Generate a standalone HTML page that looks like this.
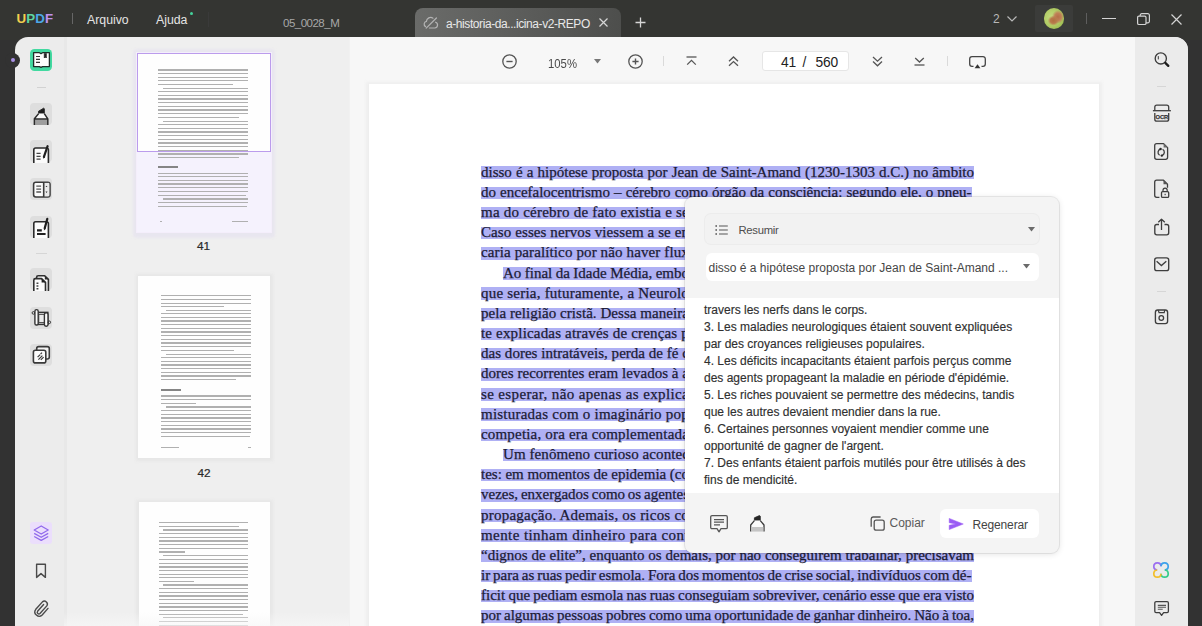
<!DOCTYPE html>
<html><head><meta charset="utf-8">
<style>
*{margin:0;padding:0;box-sizing:border-box}
html,body{width:1202px;height:626px;overflow:hidden;background:#323232;font-family:"Liberation Sans",sans-serif;position:relative}
.a{position:absolute}
svg.i{position:absolute;overflow:visible}
.ttl{position:absolute;color:#e4e4e4;font-size:12.3px;top:13px}
.hl{position:absolute;background:#afb0f4;height:12.5px}
.ln{position:absolute;height:15px;font-family:"Liberation Serif",serif;font-size:15px;line-height:15px;color:#1b1b35;white-space:nowrap;text-align:justify;text-align-last:justify;-webkit-text-stroke:0.25px #1b1b35}
.pt{position:absolute;left:704px;font-size:12px;color:#303030;white-space:nowrap;line-height:14px;-webkit-text-stroke:0.15px #303030}
.ib{position:absolute;width:22px;height:22px;border-radius:4px;background:#dedede}
.tl2{position:absolute;height:1.3px;background:#b0b0b0;filter:blur(0.4px)}
.tx{position:absolute;filter:blur(0.4px)}
</style></head><body>

<div id="tbar" class="a" style="left:0;top:0;width:1202px;height:40px;background:#343532"></div>
<div class="a" style="left:16.5px;top:10.7px;font-weight:bold;font-size:13.3px;letter-spacing:0.1px"><span style="color:#f2cf4e">U</span><span style="color:#5ed6a0">P</span><span style="color:#4ca8e6">D</span><span style="color:#bf92f0">F</span></div>
<div class="a" style="left:71.5px;top:13px;width:1px;height:10.5px;background:#666"></div>
<div class="ttl" style="left:87px">Arquivo</div>
<div class="ttl" style="left:156px">Ajuda</div>
<div class="a" style="left:189.5px;top:11.5px;width:3.5px;height:3.5px;border-radius:50%;background:#44d39b"></div>
<div class="a" style="left:208px;top:12px;width:1px;height:15px;background:#3a3a3a"></div>
<div class="a" style="left:283px;top:17px;font-size:11.5px;color:#a8a8a8;letter-spacing:-0.5px">05_0028_M</div>
<div class="a" style="left:415px;top:8px;width:206px;height:30px;background:linear-gradient(97deg,#6a6b69 0%,#5f605e 40%,#4d4e4c 100%);border-radius:8px 8px 0 0"></div>
<svg class="i" style="left:424px;top:16.5px" width="15" height="12" viewBox="0 0 15 12"><path d="M1.6 9.6 A2.8 2.8 0 0 1 2.4 4.4 A4.2 4.2 0 0 1 9 1.2" fill="none" stroke="#b4b4b4" stroke-width="1.2" stroke-linecap="round"/><path d="M11.6 5.2 A3 3 0 0 1 10.8 11 H5.4" fill="none" stroke="#b4b4b4" stroke-width="1.2" stroke-linecap="round"/><path d="M2.2 11.2 L12.4 1" stroke="#b4b4b4" stroke-width="1.2" stroke-linecap="round"/></svg>
<div class="a" style="left:446px;top:17px;font-size:12px;color:#e8e8e8;letter-spacing:-0.42px">a-historia-da...icina-v2-REPO</div>
<svg class="i" style="left:599px;top:18px" width="9" height="9" viewBox="0 0 9 9"><path d="M0.5 0.5 L8.5 8.5 M8.5 0.5 L0.5 8.5" stroke="#d6d6d6" stroke-width="1.2"/></svg>
<svg class="i" style="left:634.5px;top:16.5px" width="11" height="11" viewBox="0 0 11 11"><path d="M5.5 0.5 V10.5 M0.5 5.5 H10.5" stroke="#d6d6d6" stroke-width="1.3"/></svg>
<div class="a" style="left:993px;top:12px;font-size:12px;color:#b8b8b8">2</div>
<svg class="i" style="left:1007px;top:15.5px" width="10" height="6" viewBox="0 0 10 6"><path d="M0.5 0.5 L5 5 L9.5 0.5" fill="none" stroke="#b8b8b8" stroke-width="1.2"/></svg>
<div class="a" style="left:1035px;top:5px;width:38px;height:26.5px;background:#3b3c3a;border-radius:2px"></div>
<div class="a" style="left:1043.8px;top:8.4px;width:20.6px;height:20.8px;border-radius:50%;background:radial-gradient(ellipse 28% 24% at 47% 60%,#b0703f 0,#b87a4c 55%,rgba(184,122,76,0) 100%),radial-gradient(ellipse 30% 32% at 70% 42%,#b46f48 0,#c08058 55%,rgba(192,128,88,0) 100%),radial-gradient(circle at 40% 45%,#c6dc80 0,#b3cd68 45%,#9cbc50 80%,#6d8a30 100%)"></div>
<div class="a" style="left:1085.5px;top:13px;width:1px;height:11px;background:#5e5e5e"></div>
<div class="a" style="left:1102px;top:18px;width:14px;height:1.3px;background:#d4d4d4"></div>
<svg class="i" style="left:1137px;top:13px" width="13" height="12" viewBox="0 0 13 12"><rect x="0.6" y="3.1" width="8.4" height="8.4" rx="1.3" fill="none" stroke="#d4d4d4" stroke-width="1.2"/><path d="M3.2 3.1 V2.2 A1.6 1.6 0 0 1 4.8 0.6 H10.8 A1.6 1.6 0 0 1 12.4 2.2 V8.2 A1.6 1.6 0 0 1 10.8 9.8 H9" fill="none" stroke="#d4d4d4" stroke-width="1.2"/></svg>
<svg class="i" style="left:1171px;top:14px" width="11" height="11" viewBox="0 0 11 11"><path d="M0.5 0.5 L10.5 10.5 M10.5 0.5 L0.5 10.5" stroke="#d4d4d4" stroke-width="1.2"/></svg>

<div class="a" style="left:15px;top:37px;width:1172.5px;height:590px;background:#ececec;border-radius:13px 13px 0 0;overflow:hidden">
  <div class="a" style="left:49px;top:0;width:285px;height:590px;background:#efefef"></div>
  <div class="a" style="left:49.3px;top:0;width:3px;height:590px;background:#e8e8e8"></div>
  <div class="a" style="left:333.5px;top:0;width:1.5px;height:590px;background:#f1f1f1"></div>
  <div class="a" style="left:335.3px;top:0;width:785px;height:590px;background:#f7f7f7"></div>
  <div class="a" style="left:1120px;top:0;width:53px;height:590px;background:#ebebeb"></div>
</div>
<div class="a" style="left:5px;top:52.5px;width:15px;height:15px;border-radius:50%;background:#323232"></div>
<div class="a" style="left:11px;top:58px;width:4.2px;height:4.2px;border-radius:50%;background:#ab92e6"></div>

<!-- left toolbar -->
<div class="a" style="left:30px;top:49px;width:22px;height:22px;border-radius:4.5px;background:#42d9a0"></div>
<svg class="i" style="left:30px;top:49px" width="22" height="22" viewBox="0 0 22 22">
 <path d="M3.6 3.7 H9.4 L11 4.6 L12.6 3.7 H19.4 V17.6 H12.6 L11 18.4 L9.4 17.6 H3.6 Z" fill="#fdfdfd" stroke="#1e2d28" stroke-width="1.3" stroke-linejoin="round"/>
 <path d="M6 7.5 H10 M6 10.4 H10 M6 13.3 H10" stroke="#333" stroke-width="1.2"/>
 <path d="M14.3 4.2 V9 L15.3 8 L16.3 9 V4.2" fill="#222" stroke="#222" stroke-width="0.8"/>
</svg>
<div class="a" style="left:36.5px;top:86.5px;width:9px;height:1px;background:#d2d2d2"></div>

<div class="ib" style="left:30px;top:102.8px"></div>
<svg class="i" style="left:30px;top:102.8px" width="22" height="22" viewBox="0 0 22 22">
 <path d="M8.6 10.6 V8.2 L13.7 5.2 L14.3 5.7 V10.6 Z" fill="#1e1e1e" stroke="#1e1e1e" stroke-width="0.9" stroke-linejoin="round"/>
 <path d="M8.6 10.6 H14.3 L17.8 15.8 V22 H4.4 V15.8 Z" fill="#fafafa"/>
 <rect x="5.1" y="16.4" width="12" height="5.6" fill="#9e9e9e"/>
 <path d="M8.6 10.6 L4.4 15.8 V22 M14.3 10.6 L17.8 15.8 V22 M4.6 16.1 H17.6" fill="none" stroke="#2a2a2a" stroke-width="1.5" stroke-linejoin="round"/>
</svg>

<div class="ib" style="left:30px;top:140.3px"></div>
<svg class="i" style="left:30px;top:141px" width="22" height="22" viewBox="0 0 22 22">
 <path d="M3.8 22 V8.8 A1.8 1.8 0 0 1 5.6 7 H16.6 A1.8 1.8 0 0 1 18.4 8.8 V22" fill="#fbfbfb" stroke="#2a2a2a" stroke-width="1.6"/>
 <path d="M6.5 12.3 H10.6 M6.5 15.3 H10.6 M6.5 18.1 H10.6" stroke="#444" stroke-width="1.3"/>
 <path d="M17.6 5.2 L13.9 15.8" stroke="#1e1e1e" stroke-width="2.2" stroke-linecap="round"/>
 <path d="M13.3 14.8 L13.2 17.8 L15.2 16.2 Z" fill="#1e1e1e"/>
</svg>

<div class="ib" style="left:30px;top:177.5px"></div>
<svg class="i" style="left:30px;top:177.5px" width="22" height="22" viewBox="0 0 22 22">
 <rect x="3.6" y="4.2" width="16.4" height="14.8" rx="2.2" fill="#fbfbfb" stroke="#3a3a3a" stroke-width="1.6"/>
 <rect x="14" y="4.9" width="5.3" height="13.4" fill="#e9e9e9"/>
 <path d="M13.7 4.2 V19" stroke="#3a3a3a" stroke-width="1.6"/>
 <path d="M6.3 8.2 H11.1 M6.3 11.1 H11.1 M6.3 14 H11.1" stroke="#555" stroke-width="1.3"/>
 <path d="M16.5 7.7 L17.5 9.1 H15.5 Z M16.5 14.9 L17.5 13.5 H15.5 Z" fill="#333"/>
</svg>

<div class="ib" style="left:30px;top:215.6px"></div>
<svg class="i" style="left:30px;top:215.6px" width="22" height="22" viewBox="0 0 22 22">
 <path d="M3.8 22 V7.6 A1.8 1.8 0 0 1 5.6 5.8 H16.6 A1.8 1.8 0 0 1 18.4 7.6 V22" fill="#fbfbfb" stroke="#2a2a2a" stroke-width="1.6"/>
 <path d="M7 14.3 H11.8 M7 18 H15.6" stroke="#1e1e1e" stroke-width="2.2"/>
 <path d="M17.3 2.9 L14.7 12.3" stroke="#1e1e1e" stroke-width="2.2" stroke-linecap="round"/>
 <path d="M14 11.4 L13.9 14.4 L15.9 12.8 Z" fill="#1e1e1e"/>
</svg>
<div class="a" style="left:36px;top:252.8px;width:11px;height:1px;background:#d6d6d6"></div>

<div class="ib" style="left:30px;top:268.2px"></div>
<svg class="i" style="left:30px;top:269px" width="22" height="22" viewBox="0 0 22 22">
 <path d="M6.6 9.5 V8.4 A1.6 1.6 0 0 1 8.2 6.8 H14.7 L18.4 10.4 V22" fill="#fbfbfb" stroke="#2e2e2e" stroke-width="1.6" stroke-linejoin="round"/>
 <path d="M3.8 22 V11.2 A1.6 1.6 0 0 1 5.4 9.6 H11.6 L15.5 13.4 V22" fill="#fbfbfb" stroke="#2e2e2e" stroke-width="1.6" stroke-linejoin="round"/>
 <path d="M11.6 9.8 V13.5 H15.3 Z" fill="#1e1e1e"/>
 <path d="M14.8 7 V10.6 H18.2 Z" fill="#2a2a2a"/>
 <path d="M6.5 14.3 H8.4 M6.5 17 H8.4 M6.5 19.7 H8.4" stroke="#444" stroke-width="1.4"/>
</svg>

<div class="ib" style="left:30px;top:306.5px"></div>
<svg class="i" style="left:30px;top:306.5px" width="22" height="22" viewBox="0 0 22 22">
 <rect x="6.6" y="5.4" width="11.2" height="12" fill="#e6e6e6" stroke="#333" stroke-width="1.5"/>
 <rect x="8.8" y="7.4" width="7" height="8.1" fill="#eaeaea" stroke="#444" stroke-width="0.9"/>
 <rect x="4.9" y="2.6" width="3.3" height="15.4" rx="1.6" fill="#fbfbfb" stroke="#333" stroke-width="1.4"/>
 <rect x="14.4" y="5.8" width="3.6" height="13.4" rx="1.7" fill="#fbfbfb" stroke="#333" stroke-width="1.4"/>
 <circle cx="3.4" cy="5.9" r="1.3" fill="none" stroke="#333" stroke-width="1"/>
 <circle cx="19.3" cy="15.3" r="1.3" fill="none" stroke="#333" stroke-width="1"/>
</svg>

<div class="ib" style="left:30px;top:344.3px"></div>
<svg class="i" style="left:30px;top:344.3px" width="22" height="22" viewBox="0 0 22 22">
 <rect x="6.7" y="2.6" width="12.6" height="12.4" rx="2" fill="#f2f2f2" stroke="#3a3a3a" stroke-width="1.6"/>
 <rect x="3.4" y="6.3" width="12.4" height="12.6" rx="2" fill="#fbfbfb" stroke="#3a3a3a" stroke-width="1.6"/>
 <path d="M7.6 13.2 L10.2 10.6 M8.4 15.6 L12.4 11.6 M10.8 15.9 L13.6 13.1 M10.6 10 L12 8.6" stroke="#3a3a3a" stroke-width="1.2"/>
</svg>

<div class="a" style="left:30px;top:522.3px;width:22px;height:21.6px;border-radius:3px;background:#ebdefc"></div>
<svg class="i" style="left:30px;top:522.3px" width="22" height="22" viewBox="0 0 22 22">
 <path d="M11.2 4 L18.2 8 L11.2 12 L4.2 8 Z" fill="none" stroke="#9068ec" stroke-width="1.25" stroke-linejoin="round"/>
 <path d="M4.2 11.4 L11.2 15.3 L18.2 11.4 M4.2 14.5 L11.2 18.4 L18.2 14.5" fill="none" stroke="#9068ec" stroke-width="1.25" stroke-linejoin="round"/>
</svg>
<svg class="i" style="left:35px;top:563px" width="12" height="16" viewBox="0 0 12 16">
 <path d="M1.6 1.2 H10.4 V14.4 L6 10.6 L1.6 14.4 Z" fill="none" stroke="#4a4a4a" stroke-width="1.4" stroke-linejoin="round"/>
</svg>
<svg class="i" style="left:33px;top:599px" width="17" height="19" viewBox="0 0 17 19">
 <path d="M10.6 5.5 L4.6 12.3 A1.6 1.6 0 0 0 7 14.4 L13.8 6.9 A3 3 0 0 0 9.4 2.9 L2.8 10.3 A4.3 4.3 0 0 0 9.2 16 L15 9.4" fill="none" stroke="#4a4a4a" stroke-width="1.4" stroke-linecap="round"/>
</svg>

<!-- thumbs -->
<div class="a" style="left:133px;top:48.5px;width:142px;height:189px;border-radius:4px;background:#e8e6ef;filter:blur(1px)"></div>
<div class="a" style="left:136.3px;top:51.9px;width:135.7px;height:181.2px;background:#f4eefb"></div>
<div class="a" style="left:137.3px;top:52.9px;width:133.7px;height:179.2px;background:#f5f2fd"></div>
<div class="a" style="left:137.3px;top:52.9px;width:133.7px;height:99.5px;background:#fefefe;border:1.1px solid #bb9cec"></div>
<div class="tl2" style="left:158.3px;top:69.30px;width:89.5px"></div>
<div class="tx" style="left:158.3px;top:72.96px;width:89.5px;height:8.52px;background:repeating-linear-gradient(180deg,#b0b0b0 0,#b0b0b0 1.3px,transparent 1.3px,transparent 3.66px)"></div>
<div class="tl2" style="left:158.3px;top:83.94px;width:74.3px"></div>
<div class="tl2" style="left:162.8px;top:87.60px;width:85.0px"></div>
<div class="tx" style="left:158.3px;top:91.26px;width:89.5px;height:23.16px;background:repeating-linear-gradient(180deg,#b0b0b0 0,#b0b0b0 1.3px,transparent 1.3px,transparent 3.66px)"></div>
<div class="tl2" style="left:158.3px;top:116.88px;width:80.5px"></div>
<div class="tl2" style="left:162.8px;top:120.54px;width:85.0px"></div>
<div class="tx" style="left:158.3px;top:124.20px;width:89.5px;height:30.48px;background:repeating-linear-gradient(180deg,#b0b0b0 0,#b0b0b0 1.3px,transparent 1.3px,transparent 3.66px)"></div>
<div class="tl2" style="left:158.3px;top:157.14px;width:80.5px"></div>
<div class="a" style="left:158.2px;top:166.40px;width:19.4px;height:1.8px;background:#858585;filter:blur(0.3px)"></div>
<div class="tl2" style="left:158.3px;top:172.80px;width:89.5px"></div>
<div class="tx" style="left:158.3px;top:176.46px;width:89.5px;height:15.84px;background:repeating-linear-gradient(180deg,#b0b0b0 0,#b0b0b0 1.3px,transparent 1.3px,transparent 3.66px)"></div>
<div class="tl2" style="left:158.3px;top:194.76px;width:87.7px"></div>
<div class="tl2" style="left:162.8px;top:198.42px;width:85.0px"></div>
<div class="tx" style="left:158.3px;top:202.08px;width:89.5px;height:1.20px;background:repeating-linear-gradient(180deg,#b0b0b0 0,#b0b0b0 1.3px,transparent 1.3px,transparent 3.66px)"></div>
<div class="tl2" style="left:158.3px;top:205.74px;width:88.6px"></div>
<div class="tl2" style="left:159.7px;top:220.90px;width:2.8px"></div>
<div class="tl2" style="left:231.8px;top:220.90px;width:15.9px"></div>
<div class="a" style="left:197px;top:239.3px;font-size:11.8px;color:#2a2a2a;-webkit-text-stroke:0.2px #2a2a2a">41</div>
<div class="a" style="left:135.5px;top:273.5px;width:137px;height:187px;background:#e6e6e6;filter:blur(1.5px)"></div>
<div class="a" style="left:137.9px;top:275.7px;width:132px;height:182.8px;background:#fefefe"></div>
<div class="tl2" style="left:161.2px;top:295.00px;width:89.6px"></div>
<div class="tx" style="left:161.2px;top:298.66px;width:89.6px;height:4.86px;background:repeating-linear-gradient(180deg,#b0b0b0 0,#b0b0b0 1.3px,transparent 1.3px,transparent 3.66px)"></div>
<div class="tl2" style="left:161.2px;top:305.98px;width:62.7px"></div>
<div class="tl2" style="left:165.7px;top:309.64px;width:85.1px"></div>
<div class="tx" style="left:161.2px;top:313.30px;width:89.6px;height:34.14px;background:repeating-linear-gradient(180deg,#b0b0b0 0,#b0b0b0 1.3px,transparent 1.3px,transparent 3.66px)"></div>
<div class="tl2" style="left:161.2px;top:349.90px;width:72.6px"></div>
<div class="tl2" style="left:165.7px;top:353.56px;width:85.1px"></div>
<div class="tx" style="left:161.2px;top:357.22px;width:89.6px;height:19.50px;background:repeating-linear-gradient(180deg,#b0b0b0 0,#b0b0b0 1.3px,transparent 1.3px,transparent 3.66px)"></div>
<div class="tl2" style="left:161.2px;top:379.18px;width:74.4px"></div>
<div class="a" style="left:161.2px;top:388.80px;width:19.8px;height:1.8px;background:#858585;filter:blur(0.3px)"></div>
<div class="tl2" style="left:161.2px;top:395.40px;width:89.6px"></div>
<div class="tx" style="left:161.2px;top:399.06px;width:89.6px;height:1.20px;background:repeating-linear-gradient(180deg,#b0b0b0 0,#b0b0b0 1.3px,transparent 1.3px,transparent 3.66px)"></div>
<div class="tl2" style="left:161.2px;top:402.72px;width:34.9px"></div>
<div class="tl2" style="left:165.7px;top:406.38px;width:85.1px"></div>
<div class="tx" style="left:161.2px;top:410.04px;width:89.6px;height:23.16px;background:repeating-linear-gradient(180deg,#b0b0b0 0,#b0b0b0 1.3px,transparent 1.3px,transparent 3.66px)"></div>
<div class="tl2" style="left:161.2px;top:435.66px;width:88.7px"></div>
<div class="tl2" style="left:161.2px;top:446.90px;width:17.8px"></div>
<div class="tl2" style="left:247.5px;top:446.90px;width:3.0px"></div>
<div class="a" style="left:197.5px;top:465.6px;font-size:11.8px;color:#2a2a2a;-webkit-text-stroke:0.2px #2a2a2a">42</div>
<div class="a" style="left:136px;top:499.8px;width:136.5px;height:140px;background:#e6e6e6;filter:blur(1.5px)"></div>
<div class="a" style="left:138.5px;top:502px;width:131.5px;height:130px;background:#fefefe"></div>
<div class="tl2" style="left:158.7px;top:522.00px;width:89.1px"></div>
<div class="tl2" style="left:158.7px;top:525.66px;width:80.2px"></div>
<div class="tl2" style="left:163.2px;top:529.32px;width:84.6px"></div>
<div class="tx" style="left:158.7px;top:532.98px;width:89.1px;height:15.84px;background:repeating-linear-gradient(180deg,#b0b0b0 0,#b0b0b0 1.3px,transparent 1.3px,transparent 3.66px)"></div>
<div class="tl2" style="left:158.7px;top:551.28px;width:26.7px"></div>
<div class="tl2" style="left:163.2px;top:554.94px;width:84.6px"></div>
<div class="tx" style="left:158.7px;top:558.60px;width:89.1px;height:19.50px;background:repeating-linear-gradient(180deg,#b0b0b0 0,#b0b0b0 1.3px,transparent 1.3px,transparent 3.66px)"></div>
<div class="tl2" style="left:158.7px;top:580.56px;width:35.6px"></div>
<div class="tl2" style="left:163.2px;top:584.22px;width:84.6px"></div>
<div class="tx" style="left:158.7px;top:587.88px;width:89.1px;height:23.16px;background:repeating-linear-gradient(180deg,#b0b0b0 0,#b0b0b0 1.3px,transparent 1.3px,transparent 3.66px)"></div>
<div class="tl2" style="left:158.7px;top:613.50px;width:84.6px"></div>
<div class="tl2" style="left:163.2px;top:617.16px;width:84.6px"></div>
<div class="tx" style="left:158.7px;top:620.82px;width:89.1px;height:8.52px;background:repeating-linear-gradient(180deg,#b0b0b0 0,#b0b0b0 1.3px,transparent 1.3px,transparent 3.66px)"></div>
<div class="tl2" style="left:158.7px;top:631.80px;width:80.2px"></div>
<div class="a" style="left:64px;top:612px;width:285px;height:15px;background:linear-gradient(180deg,rgba(247,247,247,0) 0,rgba(247,247,247,.75) 100%)"></div>
<!-- doc toolbar -->
<svg class="i" style="left:501.5px;top:54px" width="15" height="15" viewBox="0 0 15 15"><circle cx="7.5" cy="7.5" r="6.7" fill="none" stroke="#555" stroke-width="1.3"/><path d="M4.4 7.5 H10.6" stroke="#555" stroke-width="1.4"/></svg>
<div class="a" style="left:547.5px;top:55.5px;font-size:12.8px;color:#4a4a4a;transform:scaleX(0.885);transform-origin:0 0">105%</div>
<svg class="i" style="left:594px;top:59px" width="7" height="5" viewBox="0 0 7 5"><path d="M0 0 H7 L3.5 4.6 Z" fill="#777"/></svg>
<svg class="i" style="left:627.5px;top:54px" width="15" height="15" viewBox="0 0 15 15"><circle cx="7.5" cy="7.5" r="6.7" fill="none" stroke="#555" stroke-width="1.3"/><path d="M4.4 7.5 H10.6 M7.5 4.4 V10.6" stroke="#555" stroke-width="1.4"/></svg>
<div class="a" style="left:662.5px;top:56px;width:1px;height:10px;background:#dadada"></div>
<svg class="i" style="left:686px;top:56px" width="11" height="10" viewBox="0 0 11 10"><path d="M0.5 1 H10.5" stroke="#555" stroke-width="1.3"/><path d="M1.2 8.6 L5.5 4.4 L9.8 8.6" fill="none" stroke="#555" stroke-width="1.3"/></svg>
<svg class="i" style="left:727.5px;top:56px" width="11" height="11" viewBox="0 0 11 11"><path d="M1 5.2 L5.5 1 L10 5.2 M1 9.8 L5.5 5.6 L10 9.8" fill="none" stroke="#555" stroke-width="1.3"/></svg>
<div class="a" style="left:761.5px;top:50.8px;width:87px;height:20.6px;background:#fff;border:1px solid #e6e6e6;border-radius:3px"></div>
<div class="a" style="left:781px;top:54.5px;font-size:13.8px;color:#222;letter-spacing:-0.2px">41</div>
<div class="a" style="left:802.5px;top:54.5px;font-size:13.8px;color:#222">/</div>
<div class="a" style="left:815.5px;top:54.5px;font-size:13.8px;color:#222;letter-spacing:-0.2px">560</div>
<svg class="i" style="left:872px;top:56px" width="11" height="11" viewBox="0 0 11 11"><path d="M1 1 L5.5 5.2 L10 1 M1 5.6 L5.5 9.8 L10 5.6" fill="none" stroke="#555" stroke-width="1.3"/></svg>
<svg class="i" style="left:913.5px;top:57px" width="11" height="9" viewBox="0 0 11 9"><path d="M0.5 8 H10.5" stroke="#555" stroke-width="1.3"/><path d="M1.2 1 L5.5 5 L9.8 1" fill="none" stroke="#555" stroke-width="1.3"/></svg>
<div class="a" style="left:947px;top:56px;width:1px;height:10px;background:#dadada"></div>
<svg class="i" style="left:968.5px;top:55.5px" width="17" height="13" viewBox="0 0 17 13"><path d="M4.5 10.4 H3 A2.3 2.3 0 0 1 0.7 8.1 V2.9 A2.3 2.3 0 0 1 3 0.6 H14 A2.3 2.3 0 0 1 16.3 2.9 V8.1 A2.3 2.3 0 0 1 14 10.4 H12.5" fill="none" stroke="#444" stroke-width="1.3"/><path d="M8.5 8.2 L11.4 12.3 H5.6 Z" fill="#333"/></svg>
<!-- page -->
<div class="a" style="left:366px;top:82px;width:736px;height:560px;background:#eeeeee;filter:blur(1.5px)"></div>
<div class="a" style="left:369px;top:84px;width:730px;height:560px;background:#ffffff"></div>
<!-- doc lines -->
<div class="hl" style="left:481px;top:166.3px;width:493.0px"></div>
<div class="ln" style="left:481px;top:164.7px;width:493.0px;">disso é a hipótese proposta por Jean de Saint-Amand (1230-1303 d.C.) no âmbito</div>
<div class="hl" style="left:481px;top:186.5px;width:490.5px"></div>
<div class="ln" style="left:481px;top:184.9px;width:490.5px;">do encefalocentrismo – cérebro como órgão da consciência: segundo ele, o pneu-</div>
<div class="hl" style="left:481px;top:206.6px;width:493.0px"></div>
<div class="ln" style="left:481px;top:205.0px;width:208.0px;letter-spacing:0.226px;text-align-last:left;">ma do cérebro de fato existia e se</div>
<div class="hl" style="left:481px;top:226.8px;width:493.0px"></div>
<div class="ln" style="left:481px;top:225.2px;width:208.0px;letter-spacing:0.092px;text-align-last:left;">Caso esses nervos viessem a se en</div>
<div class="hl" style="left:481px;top:247.0px;width:493.0px"></div>
<div class="ln" style="left:481px;top:245.4px;width:208.0px;letter-spacing:0.124px;text-align-last:left;">caria paralítico por não haver flux</div>
<div class="hl" style="left:503px;top:267.2px;width:471.0px"></div>
<div class="ln" style="left:503px;top:265.6px;width:186.0px;word-spacing:-0.39px;">Ao final da Idade Média, embo</div>
<div class="hl" style="left:481px;top:287.3px;width:493.0px"></div>
<div class="ln" style="left:481px;top:285.7px;width:208.0px;letter-spacing:0.220px;text-align-last:left;">que seria, futuramente, a Neurolo</div>
<div class="hl" style="left:481px;top:307.5px;width:493.0px"></div>
<div class="ln" style="left:481px;top:305.9px;width:208.0px;letter-spacing:0.053px;text-align-last:left;">pela religião cristã. Dessa maneira</div>
<div class="hl" style="left:481px;top:327.7px;width:493.0px"></div>
<div class="ln" style="left:481px;top:326.1px;width:208.0px;letter-spacing:0.177px;text-align-last:left;">te explicadas através de crenças p</div>
<div class="hl" style="left:481px;top:347.8px;width:493.0px"></div>
<div class="ln" style="left:481px;top:346.2px;width:208.0px;letter-spacing:0.028px;text-align-last:left;">das dores intratáveis, perda de fé c</div>
<div class="hl" style="left:481px;top:368.0px;width:493.0px"></div>
<div class="ln" style="left:481px;top:366.4px;width:208.0px;letter-spacing:0.030px;text-align-last:left;">dores recorrentes eram levados à a</div>
<div class="hl" style="left:481px;top:388.2px;width:493.0px"></div>
<div class="ln" style="left:481px;top:386.6px;width:208.0px;letter-spacing:0.365px;text-align-last:left;">se esperar, não apenas as explica</div>
<div class="hl" style="left:481px;top:408.3px;width:493.0px"></div>
<div class="ln" style="left:481px;top:406.7px;width:208.0px;letter-spacing:0.232px;text-align-last:left;">misturadas com o imaginário pop</div>
<div class="hl" style="left:481px;top:428.5px;width:493.0px"></div>
<div class="ln" style="left:481px;top:426.9px;width:208.0px;letter-spacing:0.181px;text-align-last:left;">competia, ora era complementada</div>
<div class="hl" style="left:503px;top:448.7px;width:471.0px"></div>
<div class="ln" style="left:503px;top:447.1px;width:186.0px;letter-spacing:0.086px;text-align-last:left;">Um fenômeno curioso acontec</div>
<div class="hl" style="left:481px;top:468.9px;width:493.0px"></div>
<div class="ln" style="left:481px;top:467.2px;width:208.0px;word-spacing:-0.24px;">tes: em momentos de epidemia (co</div>
<div class="hl" style="left:481px;top:489.0px;width:493.0px"></div>
<div class="ln" style="left:481px;top:487.4px;width:208.0px;word-spacing:-1.06px;">vezes, enxergados como os agentes</div>
<div class="hl" style="left:481px;top:509.2px;width:493.0px"></div>
<div class="ln" style="left:481px;top:507.6px;width:208.0px;letter-spacing:0.226px;text-align-last:left;">propagação. Ademais, os ricos co</div>
<div class="hl" style="left:481px;top:529.4px;width:493.0px"></div>
<div class="ln" style="left:481px;top:527.8px;width:208.0px;letter-spacing:0.422px;text-align-last:left;">mente tinham dinheiro para cont</div>
<div class="hl" style="left:481px;top:549.5px;width:493.0px"></div>
<div class="ln" style="left:481px;top:547.9px;width:493.0px;">“dignos de elite”, enquanto os demais, por não conseguirem trabalhar, precisavam</div>
<div class="hl" style="left:481px;top:569.7px;width:490.5px"></div>
<div class="ln" style="left:481px;top:568.1px;width:490.5px;word-spacing:-0.88px;">ir para as ruas pedir esmola. Fora dos momentos de crise social, indivíduos com dé-</div>
<div class="hl" style="left:481px;top:589.9px;width:493.0px"></div>
<div class="ln" style="left:481px;top:588.3px;width:493.0px;word-spacing:-0.53px;">ficit que pediam esmola nas ruas conseguiam sobreviver, cenário esse que era visto</div>
<div class="hl" style="left:481px;top:610.0px;width:493.0px"></div>
<div class="ln" style="left:481px;top:608.4px;width:493.0px;word-spacing:-0.75px;">por algumas pessoas pobres como uma oportunidade de ganhar dinheiro. Não à toa,</div>
<!-- popup -->
<div class="a" style="left:685px;top:197px;width:374px;height:355.5px;border-radius:8px;background:#f4f4f4;box-shadow:0 1px 6px rgba(0,0,0,0.12),0 0 0 1px rgba(0,0,0,0.07);overflow:hidden">
  <div class="a" style="left:0;top:101px;width:374px;height:195px;background:#ffffff"></div>
</div>
<div class="a" style="left:704.5px;top:214px;width:334.5px;height:30px;border-radius:6px;background:#f2f2f2;box-shadow:0 0 0 1px #ececec"></div>
<svg class="i" style="left:714.5px;top:224.5px" width="13" height="10" viewBox="0 0 13 10"><path d="M0.4 1 H2 M0.4 5 H2 M0.4 9 H2" stroke="#555" stroke-width="1.3"/><path d="M4 1 H12.8 M4 5 H12.8 M4 9 H12.8" stroke="#555" stroke-width="1.2"/></svg>
<div class="a" style="left:738.5px;top:223.5px;font-size:11.3px;color:#4e4e4e;letter-spacing:-0.3px">Resumir</div>
<svg class="i" style="left:1027.5px;top:226.5px" width="7" height="5" viewBox="0 0 7 5"><path d="M0 0 H7 L3.5 4.6 Z" fill="#6a6a6a"/></svg>
<div class="a" style="left:705.5px;top:253px;width:333px;height:28px;border-radius:6px;background:#ffffff"></div>
<div class="a" style="left:708.5px;top:261px;font-size:12px;color:#464646;letter-spacing:0px;white-space:nowrap">disso é a hipótese proposta por Jean de Saint-Amand ...</div>
<svg class="i" style="left:1022.5px;top:264px" width="7" height="5" viewBox="0 0 7 5"><path d="M0 0 H7 L3.5 4.6 Z" fill="#6a6a6a"/></svg>
<div class="pt" style="top:303px">travers les nerfs dans le corps.</div>
<div class="pt" style="top:320px">3. Les maladies neurologiques étaient souvent expliquées</div>
<div class="pt" style="top:337px">par des croyances religieuses populaires.</div>
<div class="pt" style="top:354px">4. Les déficits incapacitants étaient parfois perçus comme</div>
<div class="pt" style="top:371px">des agents propageant la maladie en période d'épidémie.</div>
<div class="pt" style="top:388px">5. Les riches pouvaient se permettre des médecins, tandis</div>
<div class="pt" style="top:405px">que les autres devaient mendier dans la rue.</div>
<div class="pt" style="top:422px">6. Certaines personnes voyaient mendier comme une</div>
<div class="pt" style="top:439px">opportunité de gagner de l'argent.</div>
<div class="pt" style="top:456px">7. Des enfants étaient parfois mutilés pour être utilisés à des</div>
<div class="pt" style="top:473px">fins de mendicité.</div>
<!-- footer -->
<svg class="i" style="left:710px;top:515px" width="18" height="18" viewBox="0 0 18 18"><path d="M2 0.7 H16 A1.3 1.3 0 0 1 17.3 2 V12.4 A1.3 1.3 0 0 1 16 13.7 H11 L9 16.8 L7 13.7 H2 A1.3 1.3 0 0 1 0.7 12.4 V2 A1.3 1.3 0 0 1 2 0.7 Z" fill="none" stroke="#555" stroke-width="1.3" stroke-linejoin="round"/><path d="M4 4.6 H14 M4 7.2 H14 M4 9.8 H10" stroke="#555" stroke-width="1.2"/></svg>
<svg class="i" style="left:750px;top:514.5px" width="15" height="17" viewBox="0 0 15 17"><path d="M4.4 5.6 V2.8 L9.4 0.6 L10.3 1.2 V5.6 Z" fill="#262626" stroke="#262626" stroke-width="0.8" stroke-linejoin="round"/><path d="M4.4 5.6 H10.3 L14 10 V16.6 H0.7 V10 Z" fill="#fafafa"/><path d="M4.4 5.6 L0.7 10 V16.6 M10.3 5.6 L14 10 V16.6" fill="none" stroke="#3a3a3a" stroke-width="1.3" stroke-linejoin="round"/><rect x="1.35" y="12" width="12" height="4.6" fill="#c4c4c4"/></svg>
<svg class="i" style="left:869.5px;top:515.5px" width="15" height="15" viewBox="0 0 15 15"><rect x="4.2" y="4.2" width="10" height="10" rx="2" fill="none" stroke="#555" stroke-width="1.3"/><path d="M1.2 10.8 V3 A2 2 0 0 1 3 1 H10.6" fill="none" stroke="#555" stroke-width="1.3"/></svg>
<div class="a" style="left:889.5px;top:516px;font-size:12px;color:#5a5a5a">Copiar</div>
<div class="a" style="left:939.5px;top:509px;width:99px;height:29px;border-radius:6px;background:#ffffff"></div>
<svg class="i" style="left:948.6px;top:518px" width="15" height="12" viewBox="0 0 15 12"><path d="M0.2 0.4 L14.3 6 L0.2 11.6 V7.3 L6.8 6 L0.2 4.7 Z" fill="#9a5cf4" stroke="#9a5cf4" stroke-width="0.5" stroke-linejoin="round"/></svg>
<div class="a" style="left:972.5px;top:517.5px;font-size:12px;color:#444;letter-spacing:-0.15px">Regenerar</div>

<!-- right sidebar -->
<svg class="i" style="left:1150px;top:48px" width="22" height="22" viewBox="0 0 22 22">
 <circle cx="10.8" cy="10.4" r="5.6" fill="none" stroke="#3a3a3a" stroke-width="1.35"/>
 <path d="M8.3 8.5 V11" stroke="#3a3a3a" stroke-width="1" stroke-linecap="round"/>
 <path d="M15.3 14.9 L18.3 17.9" stroke="#1e1e1e" stroke-width="2.3" stroke-linecap="round"/>
</svg>
<div class="a" style="left:1157px;top:86px;width:9px;height:1px;background:#d6d6d6"></div>
<svg class="i" style="left:1150px;top:100px" width="22" height="22" viewBox="0 0 22 22">
 <path d="M4.8 10.7 V7.2 A2 2 0 0 1 6.8 5.2 H16.7 A2 2 0 0 1 18.7 7.2 V10.7" fill="none" stroke="#3e3e3e" stroke-width="1.3"/>
 <path d="M2.9 10.7 H20.9" stroke="#3e3e3e" stroke-width="1.3"/>
 <path d="M4.8 12.9 V19.2 A2 2 0 0 0 6.8 21.2 H16.7 A2 2 0 0 0 18.7 19.2 V12.9" fill="none" stroke="#3e3e3e" stroke-width="1.3"/>
 <text x="11.8" y="18.6" font-family="Liberation Sans" font-weight="bold" font-size="5.8" text-anchor="middle" fill="#333" stroke="#333" stroke-width="0.25" letter-spacing="-0.1">OCR</text>
</svg>
<svg class="i" style="left:1150px;top:138px" width="22" height="22" viewBox="0 0 22 22">
 <path d="M6.7 5.6 H13.6 L17.6 9.6 V19.3 A2 2 0 0 1 15.6 21.3 H6.7 A2 2 0 0 1 4.7 19.3 V7.6 A2 2 0 0 1 6.7 5.6 Z" fill="none" stroke="#3e3e3e" stroke-width="1.3" stroke-linejoin="round"/>
 <path d="M13.6 5.6 V9.6 H17.6 Z" fill="#6a6a6a"/>
 <path d="M10.6 11 A3.5 3.5 0 0 0 9.6 17.3 M11.8 17.6 A3.5 3.5 0 0 0 12.6 11.2" fill="none" stroke="#3e3e3e" stroke-width="1.3"/>
 <circle cx="10.6" cy="11" r="1.2" fill="#2a2a2a"/><circle cx="11.8" cy="17.6" r="1.2" fill="#2a2a2a"/>
</svg>
<svg class="i" style="left:1150px;top:176px" width="22" height="22" viewBox="0 0 22 22">
 <path d="M9.4 21.3 H6.7 A2 2 0 0 1 4.7 19.3 V6.2 A2 2 0 0 1 6.7 4.2 H13.5 L17.5 8.2 V11.8" fill="none" stroke="#3e3e3e" stroke-width="1.3" stroke-linejoin="round"/>
 <path d="M13.5 4.2 V8.2 H17.5 Z" fill="#555"/>
 <rect x="11.5" y="15.6" width="7.2" height="5.8" rx="1.2" fill="none" stroke="#3e3e3e" stroke-width="1.3"/>
 <path d="M13 15.5 V14.3 A2.1 2.1 0 0 1 17.2 14.3 V15.5" fill="none" stroke="#3e3e3e" stroke-width="1.2"/>
 <rect x="14.5" y="17.8" width="1.3" height="1.4" fill="#555"/>
</svg>
<svg class="i" style="left:1150px;top:214px" width="22" height="22" viewBox="0 0 22 22">
 <path d="M9 10.5 H6.8 A2 2 0 0 0 4.8 12.5 V18.8 A2 2 0 0 0 6.8 20.8 H16.7 A2 2 0 0 0 18.7 18.8 V12.5 A2 2 0 0 0 16.7 10.5 H14.5" fill="none" stroke="#3e3e3e" stroke-width="1.35"/>
 <path d="M11.5 16 V5.6" stroke="#3e3e3e" stroke-width="1.3"/>
 <path d="M8.3 8.3 L11.5 5.2 L14.8 8.3" fill="none" stroke="#3e3e3e" stroke-width="1.3" stroke-linejoin="round"/>
</svg>
<svg class="i" style="left:1150px;top:253px" width="22" height="22" viewBox="0 0 22 22">
 <rect x="4.7" y="4.8" width="14" height="12.8" rx="2.2" fill="none" stroke="#3e3e3e" stroke-width="1.35"/>
 <path d="M6.6 8.3 L11.4 12.6 L16.3 8.3" fill="none" stroke="#3e3e3e" stroke-width="1.3"/>
</svg>
<div class="a" style="left:1157px;top:290.5px;width:9px;height:1px;background:#d6d6d6"></div>
<svg class="i" style="left:1150px;top:305px" width="22" height="22" viewBox="0 0 22 22">
 <rect x="5.4" y="5" width="12.2" height="13.6" rx="2.3" fill="none" stroke="#3e3e3e" stroke-width="1.35"/>
 <path d="M8.3 5.2 L9 7.6 H14.2 L14.8 5.2" fill="none" stroke="#3e3e3e" stroke-width="1.2"/>
 <circle cx="11.3" cy="13" r="2.3" fill="none" stroke="#3e3e3e" stroke-width="1.3"/>
</svg>
<svg class="i" style="left:1150px;top:559px" width="22" height="22" viewBox="0 0 22 22">
 <defs>
  <linearGradient id="g1" x1="0" y1="0" x2="1" y2="1"><stop offset="0" stop-color="#a66cf2"/><stop offset="0.5" stop-color="#6a8cf0"/><stop offset="1" stop-color="#3cb8e8"/></linearGradient>
 </defs>
 <path d="M11 7.2 A3.6 3.6 0 1 0 7.2 11" fill="none" stroke="#9c6ef0" stroke-width="1.7"/>
 <path d="M11 7.2 A3.6 3.6 0 1 1 14.8 11" fill="none" stroke="#3ea2ea" stroke-width="1.7"/>
 <path d="M14.8 11 A3.6 3.6 0 1 1 11 14.8" fill="none" stroke="#34cc8a" stroke-width="1.7"/>
 <path d="M11 14.8 A3.6 3.6 0 1 1 7.2 11" fill="none" stroke="#f2bf2c" stroke-width="1.7"/>
</svg>
<svg class="i" style="left:1150px;top:597px" width="22" height="22" viewBox="0 0 22 22">
 <path d="M6.6 4.6 H17.1 A1.3 1.3 0 0 1 18.4 5.9 V14.3 A1.3 1.3 0 0 1 17.1 15.6 H13.6 L11.6 18.4 L9.6 15.6 H6.1 A1.3 1.3 0 0 1 4.8 14.3 V5.9 A1.3 1.3 0 0 1 6.1 4.6 Z" fill="none" stroke="#3e3e3e" stroke-width="1.3" stroke-linejoin="round"/>
 <path d="M7.8 8.4 H16 M7.8 10.3 H16 M7.8 12.2 H12.7" stroke="#555" stroke-width="1.1"/>
</svg>

</body></html>
